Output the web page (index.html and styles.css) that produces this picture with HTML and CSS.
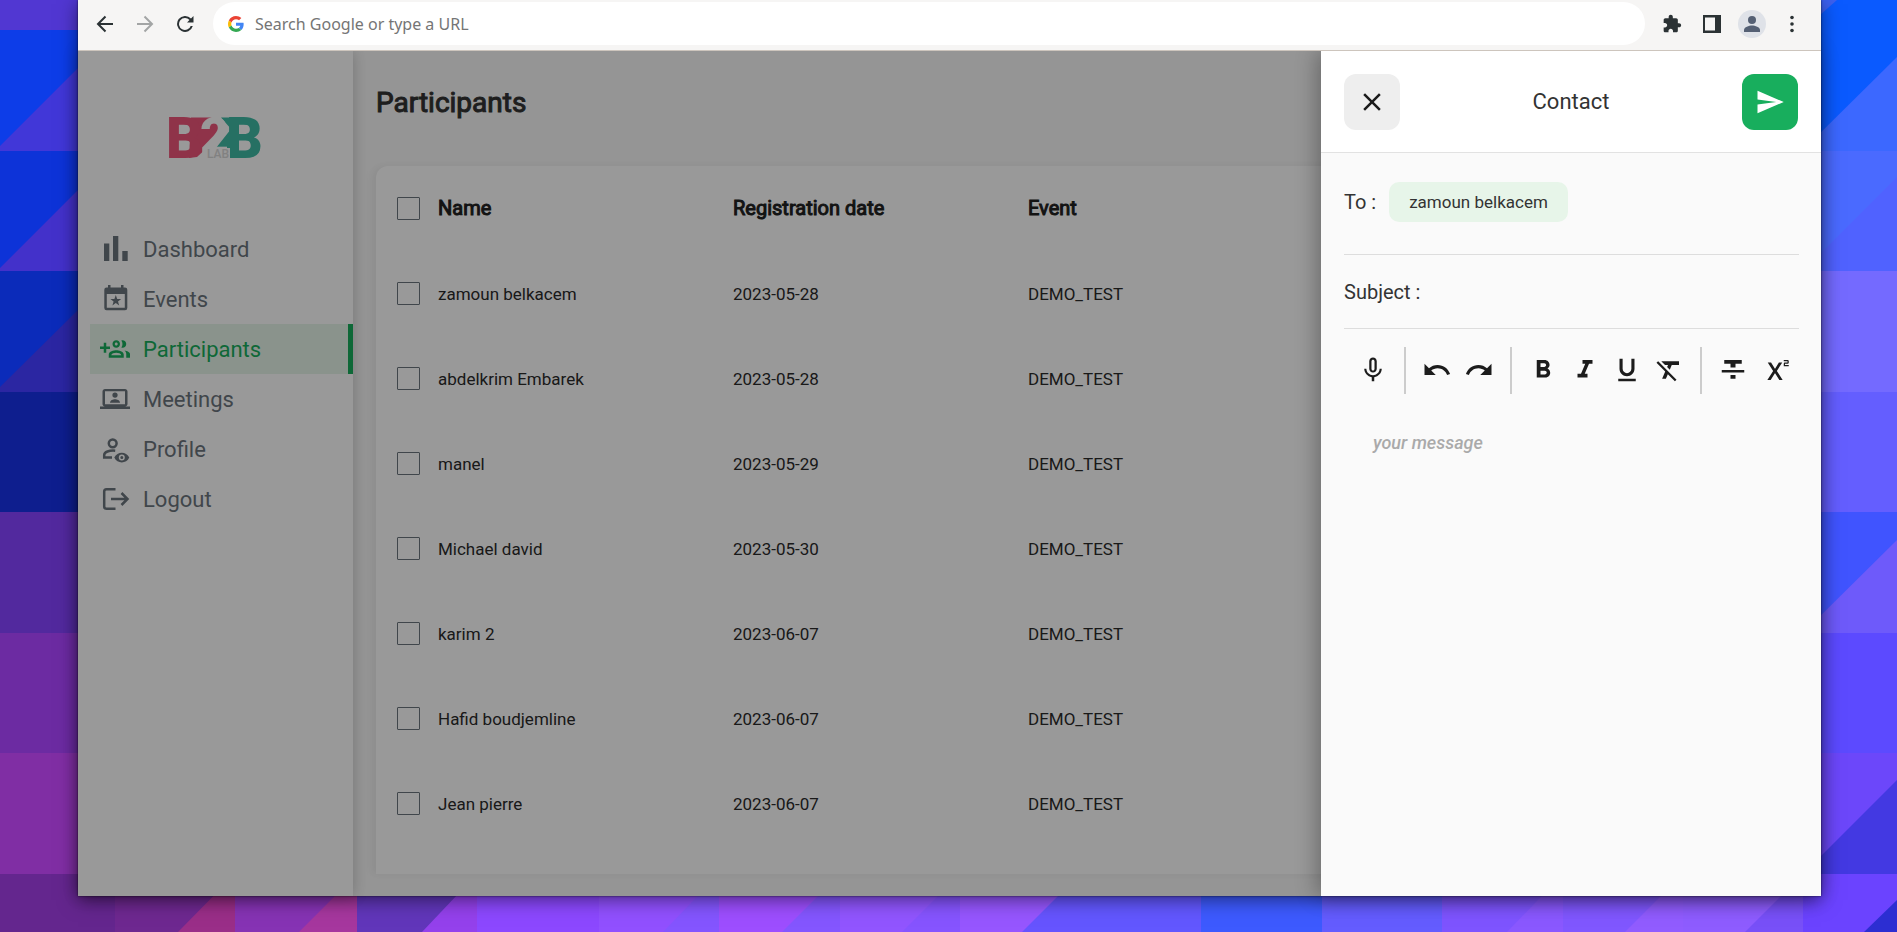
FILE: index.html
```html
<!DOCTYPE html>
<html lang="en">
<head>
<meta charset="utf-8">
<title>Participants</title>
<link rel="stylesheet" href="styles.css">
</head>
<body>
<svg class="wallpaper" viewBox="0 0 1897 932" preserveAspectRatio="none" aria-hidden="true">
  <rect width="1897" height="932" fill="#5b48ff"/>
  <rect width="120" height="30" fill="#5137d2"/>
  <path d="M0 30H120V151H0z" fill="#0d3de8"/><path d="M0 146L78 68L120 26V151H0z" fill="#4137d8"/>
  <path d="M0 151H120V271H0z" fill="#0d33d8"/><path d="M0 268L78 190L120 151V271H0z" fill="#4331ca"/>
  <rect y="271" width="120" height="121" fill="#0b2bba"/><path d="M0 387L78 310L120 271V392H0z" fill="#2b26a2"/>
  <rect y="392" width="120" height="120" fill="#0e1e8e"/>
  <rect y="512" width="120" height="121" fill="#52299e"/>
  <rect y="633" width="120" height="120" fill="#6c2ba2"/>
  <rect y="753" width="120" height="121" fill="#802ea4"/>
  <rect y="874" width="120" height="58" fill="#64268e"/>
  <g transform="translate(0 874)">
    <path d="M115 0H235V58H115z" fill="#6e2890"/><path d="M178 58L235 0V58z" fill="#9a2e88"/>
    <path d="M235 0H357V58H235z" fill="#8633b4"/><path d="M299 58L357 0V58z" fill="#a6379e"/>
    <path d="M357 0H477V58H357z" fill="#6136ba"/><path d="M422 58L477 0V58z" fill="#9441ec"/>
    <path d="M477 0H599V58H477z" fill="#8c48ff"/>
    <path d="M599 0H719V58H599z" fill="#9150ff"/><path d="M663 58L719 0V58z" fill="#8455ff"/>
    <path d="M719 0H840V58H719z" fill="#9d4eff"/><path d="M782 58L840 0V58z" fill="#8456ff"/>
    <path d="M840 0H960V58H840z" fill="#9155ff"/><path d="M902 58L960 0V58z" fill="#8654ff"/>
    <path d="M960 0H1080V58H960z" fill="#9656ff"/><path d="M1022 58L1080 0V58z" fill="#6654ff"/>
    <path d="M1080 0H1201V58H1080z" fill="#6257ff"/>
    <path d="M1201 0H1322V58H1201z" fill="#3d5aff"/>
    <path d="M1322 0H1442V58H1322z" fill="#645cff"/>
    <path d="M1442 0H1563V58H1442z" fill="#7e54ff"/><path d="M1507 58L1563 0V58z" fill="#8a58ff"/>
    <path d="M1563 0H1683V58H1563z" fill="#8057ff"/><path d="M1625 58L1683 0V58z" fill="#915cff"/>
    <path d="M1683 0H1803V58H1683z" fill="#8e5cff"/><path d="M1745 58L1803 0V58z" fill="#7850f8"/>
  </g>
  <g transform="translate(1803 0)">
    <path d="M0 0H94V151H0z" fill="#0a5aff"/><path d="M0 30L34 0H0z" fill="#3c60f0"/><path d="M0 150L94 57V151H0z" fill="#3c68ff"/>
    <path d="M0 151H94V271H0z" fill="#4a6aff"/><path d="M0 271L94 177V271z" fill="#5062ff"/>
    <path d="M0 271H94V392H0z" fill="#746aff"/>
    <path d="M0 392H94V512H0z" fill="#645eff"/>
    <path d="M0 512H94V633H0z" fill="#4054ff"/><path d="M0 633L94 540V633z" fill="#6e5afa"/>
    <path d="M0 633H94V753H0z" fill="#5c4aff"/>
    <path d="M0 753H94V874H0z" fill="#6c47fa"/><path d="M0 874L94 780V874z" fill="#4339e2"/>
    <path d="M0 874H94V932H0z" fill="#6b43ff"/><path d="M61 932L94 900V932z" fill="#2c2ed2"/>
  </g>
</svg>

<div class="window">
  <header class="toolbar">
    <button class="tool" aria-label="Back"><svg width="18" height="18" viewBox="0 0 18 18" fill="none" stroke="#2b3234" stroke-width="2"><path d="M17 9H2M9.500 1.500L2 9l7.500 7.500"/></svg></button>
    <button class="tool" aria-label="Forward"><svg width="18" height="18" viewBox="0 0 18 18" fill="none" stroke="#a3a5a5" stroke-width="2"><path d="M1 9h15M8.500 1.500L16 9l-7.500 7.500"/></svg></button>
    <button class="tool" aria-label="Reload"><svg width="18" height="18" viewBox="0 0 18 18"><path d="M15 3.500A8 8 0 1 0 16.800 11h-2.100a6 6 0 1 1-1.200-6L11 7.500h6.500V1z" fill="#2b3234"/></svg></button>
    <label class="omnibox">
      <svg width="16" height="16" viewBox="0 0 48 48"><path fill="#EA4335" d="M24 9.500c3.540 0 6.710 1.220 9.210 3.600l6.850-6.850C35.900 2.380 30.470 0 24 0 14.620 0 6.510 5.380 2.560 13.220l7.980 6.190C12.430 13.720 17.740 9.500 24 9.500z"/><path fill="#4285F4" d="M46.980 24.550c0-1.570-.15-3.090-.38-4.550H24v9.020h12.940c-.58 2.960-2.260 5.480-4.780 7.180l7.730 6c4.510-4.180 7.090-10.360 7.090-17.650z"/><path fill="#FBBC05" d="M10.530 28.590c-.48-1.450-.76-2.990-.76-4.590s.27-3.140.76-4.590l-7.980-6.190C.92 16.460 0 20.120 0 24c0 3.880.92 7.540 2.560 10.780l7.970-6.190z"/><path fill="#34A853" d="M24 48c6.480 0 11.930-2.130 15.890-5.810l-7.730-6c-2.150 1.450-4.920 2.300-8.160 2.300-6.260 0-11.570-4.220-13.470-9.910l-7.980 6.190C6.510 42.620 14.620 48 24 48z"/></svg>
      <input type="text" placeholder="Search Google or type a URL" aria-label="Address">
    </label>
    <button class="tool" aria-label="Extensions"><svg width="20" height="20" viewBox="0 0 24 24" fill="#2b3234"><path d="M20.500 11H19V7c0-1.100-.9-2-2-2h-4V3.500C13 2.120 11.880 1 10.500 1S8 2.120 8 3.500V5H4c-1.100 0-2 .9-2 2v3.800h1.500c1.490 0 2.700 1.210 2.700 2.700s-1.210 2.700-2.700 2.700H2V20c0 1.100.9 2 2 2h3.800v-1.500c0-1.490 1.210-2.700 2.700-2.700s2.700 1.210 2.700 2.700V22H17c1.100 0 2-.9 2-2v-4h1.500c1.380 0 2.500-1.120 2.500-2.500S21.880 11 20.500 11z"/></svg></button>
    <button class="tool" aria-label="Side panel"><svg width="18" height="18" viewBox="0 0 18 18"><path fill="#2b3234" fill-rule="evenodd" d="M0 0h18v18H0zM2 2.500v13h10v-13z"/></svg></button>
    <button class="tool" aria-label="Account"><svg width="28" height="28" viewBox="0 0 28 28"><circle cx="14" cy="14" r="14" fill="#dfe2e8"/><circle cx="14" cy="10" r="4" fill="#556074"/><path d="M6 22v-2c0-3 5-4.500 8-4.500s8 1.500 8 4.500v2z" fill="#556074"/></svg></button>
    <button class="tool" aria-label="Menu"><svg width="18" height="18" viewBox="0 0 18 18" fill="#2b3234"><circle cx="9" cy="2.500" r="1.800"/><circle cx="9" cy="9" r="1.800"/><circle cx="9" cy="15.500" r="1.800"/></svg></button>
  </header>

  <div class="page">
    <aside class="sidebar">
      <a class="brand" href="#" aria-label="B2B LAB">
        <svg class="logo" width="94" height="42" viewBox="0 0 94 42">
          <path d="M22 .5H42L54 10 52 18 28 40 20 41z" fill="#ee557a"/>
          <path d="M52 .5H70V41H61V31H47L62 12z" fill="#40bba5"/>
          <text class="logo-b" x="-3" y="41" fill="#ee557a">B</text>
          <text class="logo-b" x="57" y="41" fill="#40bba5">B</text>
          <text class="logo-two" x="31" y="36">2</text>
          <path d="M30 42L40 31H61V42z" fill="#fff"/>
          <text class="logo-lab" x="38" y="41">LAB</text>
        </svg>
      </a>
      <nav class="nav">
        <a class="nav-link" href="#"><svg class="icon" viewBox="0 0 30 30"><path d="M4 9.500h5.300V27H4zM13 2h5.300v25H13zM22.300 17h5.400v10h-5.400z"/></svg>Dashboard</a>
        <a class="nav-link" href="#"><svg class="icon" viewBox="0 0 30 30"><path fill-rule="evenodd" d="M8 1h2.500v2.500h10.500V1h2.500v2.500H25a2.300 2.300 0 0 1 2.300 2.300V24A2.300 2.300 0 0 1 25 26.300H6.600A2.300 2.300 0 0 1 4.300 24V5.800a2.300 2.300 0 0 1 2.300-2.300H8zM6.800 10v13.800h18V10z"/><path d="M15.800 11l1.400 4h4l-3.200 2.500 1.200 4-3.400-2.400-3.400 2.400 1.200-4-3.200-2.500h4z"/></svg>Events</a>
        <a class="nav-link active" href="#" aria-current="page"><svg class="icon" viewBox="0 0 24 24"><path d="M8 10H5V7H3v3H0v2h3v3h2v-3h3zM18 11c1.660 0 2.990-1.340 2.990-3S19.660 5 18 5c-.32 0-.63.05-.91.14.57.81.9 1.790.9 2.860s-.34 2.040-.9 2.860c.28.09.59.14.91.14zM13 11c1.660 0 2.990-1.340 2.990-3S14.660 5 13 5c-1.660 0-3 1.340-3 3s1.340 3 3 3zm0-4.200c.66 0 1.200.54 1.200 1.200s-.54 1.200-1.200 1.200-1.200-.54-1.200-1.200.54-1.200 1.200-1.200zM19.620 13.160c.83.73 1.380 1.660 1.380 2.840v3h3v-3c0-1.540-2.370-2.490-4.380-2.840zM13 13c-2 0-6 1-6 3.500V19h12v-2.500c0-2.500-4-3.500-6-3.500zm-4 4c.3-1.400 2.300-2 4-2s3.700.6 4 2z"/></svg>Participants</a>
        <a class="nav-link" href="#"><svg class="icon" viewBox="0 0 24 24"><path fill-rule="evenodd" d="M20 18c1.100 0 2-.9 2-2V6c0-1.100-.9-2-2-2H4c-1.100 0-2 .9-2 2v10c0 1.100.9 2 2 2H0v2h24v-2zM4 5.800h16V16.200H4z"/><circle cx="12" cy="8.800" r="2.100"/><path d="M8 15c0-2 2.500-2.800 4-2.800s4 .8 4 2.800z"/></svg>Meetings</a>
        <a class="nav-link" href="#"><svg class="icon" viewBox="0 0 30 30"><g fill="none" stroke="currentColor" stroke-width="2.500"><circle cx="12.700" cy="9.300" r="3.900"/><path d="M12 23.500H4.200V21c0-3 5-4.800 11-4.300"/></g><path fill-rule="evenodd" d="M14.300 23.500c3-6.500 12-6.500 15 0-3 6.500-12 6.500-15 0zm7.500-3a3 3 0 1 0 0 6 3 3 0 0 0 0-6zm0 1.500a1.500 1.500 0 1 1 0 3 1.500 1.500 0 0 1 0-3z"/></svg>Profile</a>
        <a class="nav-link" href="#"><svg class="icon" viewBox="0 0 30 30"><path fill="none" stroke="currentColor" stroke-width="2.500" d="M15.500 5.300H6.500a2.300 2.300 0 0 0-2.300 2.300V22.400a2.300 2.300 0 0 0 2.300 2.300H15.500M11 15H27M21.500 9l6 6-6 6"/></svg>Logout</a>
      </nav>
    </aside>

    <main class="main">
      <h1 class="title">Participants</h1>
      <div class="card">
        <table class="table">
          <colgroup><col class="col-check"><col class="col-text"><col class="col-text"><col></colgroup>
          <thead>
            <tr><th><input class="check" type="checkbox" aria-label="Select all"></th><th>Name</th><th>Registration date</th><th>Event</th></tr>
          </thead>
          <tbody>
            <tr><td><input class="check" type="checkbox" aria-label="Select zamoun belkacem"></td><td>zamoun belkacem</td><td>2023-05-28</td><td>DEMO_TEST</td></tr>
            <tr><td><input class="check" type="checkbox" aria-label="Select abdelkrim Embarek"></td><td>abdelkrim Embarek</td><td>2023-05-28</td><td>DEMO_TEST</td></tr>
            <tr><td><input class="check" type="checkbox" aria-label="Select manel"></td><td>manel</td><td>2023-05-29</td><td>DEMO_TEST</td></tr>
            <tr><td><input class="check" type="checkbox" aria-label="Select Michael david"></td><td>Michael david</td><td>2023-05-30</td><td>DEMO_TEST</td></tr>
            <tr><td><input class="check" type="checkbox" aria-label="Select karim 2"></td><td>karim 2</td><td>2023-06-07</td><td>DEMO_TEST</td></tr>
            <tr><td><input class="check" type="checkbox" aria-label="Select Hafid boudjemline"></td><td>Hafid boudjemline</td><td>2023-06-07</td><td>DEMO_TEST</td></tr>
            <tr><td><input class="check" type="checkbox" aria-label="Select Jean pierre"></td><td>Jean pierre</td><td>2023-06-07</td><td>DEMO_TEST</td></tr>
          </tbody>
        </table>
      </div>
    </main>

    <div class="backdrop"></div>
    <section class="drawer" aria-labelledby="drawer-title">
      <header class="drawer-head">
        <button class="square" aria-label="Close"><svg class="icon" viewBox="0 0 24 24"><path d="M19 6.410L17.590 5 12 10.590 6.410 5 5 6.410 10.590 12 5 17.590 6.410 19 12 13.410 17.590 19 19 17.590 13.410 12z"/></svg></button>
        <h2 class="drawer-title" id="drawer-title">Contact</h2>
        <button class="square send" aria-label="Send"><svg class="icon" viewBox="0 0 24 24"><path d="M2.010 21L23 12 2.010 3 2 10l15 2-15 2z"/></svg></button>
      </header>
      <form class="compose">
        <div class="field to"><span>To :</span><span class="chip">zamoun belkacem</span></div>
        <div class="field subject"><label for="subject">Subject :</label><input id="subject" type="text"></div>
        <div class="editor-bar">
          <button type="button" aria-label="Dictate"><svg class="icon" viewBox="0 0 24 24"><path d="M12 14c1.660 0 2.990-1.340 2.990-3L15 5c0-1.660-1.340-3-3-3S9 3.340 9 5v6c0 1.660 1.340 3 3 3zm-1.200-9.100c0-.66.54-1.200 1.200-1.200s1.200.54 1.200 1.200l-.01 6.200c0 .66-.53 1.200-1.190 1.200s-1.200-.54-1.200-1.200V4.900zM17.300 11c0 3-2.540 5.100-5.300 5.100S6.700 14 6.700 11H5c0 3.410 2.720 6.230 6 6.720V21h2v-3.280c3.280-.48 6-3.300 6-6.720z"/></svg></button>
          <span class="rule"></span>
          <button type="button" aria-label="Undo"><svg class="icon" viewBox="0 0 24 24"><path d="M12.500 8c-2.650 0-5.050.99-6.900 2.600L2 7v9h9l-3.620-3.620c1.390-1.160 3.160-1.880 5.120-1.880 3.540 0 6.550 2.310 7.600 5.500l2.370-.78C21.080 11.030 17.150 8 12.500 8z"/></svg></button>
          <button type="button" aria-label="Redo"><svg class="icon" viewBox="0 0 24 24"><path d="M18.400 10.600C16.550 8.990 14.150 8 11.500 8c-4.650 0-8.580 3.030-9.960 7.220L3.900 16c1.050-3.190 4.050-5.500 7.600-5.500 1.950 0 3.730.72 5.120 1.880L13 16h9V7z"/></svg></button>
          <span class="rule"></span>
          <button type="button" aria-label="Bold"><svg class="icon" viewBox="0 0 24 24"><path d="M15.600 10.790c.97-.67 1.650-1.770 1.650-2.790 0-2.260-1.750-4-4-4H7v14h7.040c2.090 0 3.710-1.700 3.710-3.790 0-1.520-.86-2.820-2.150-3.420zM10 6.500h3c.83 0 1.500.67 1.500 1.500s-.67 1.500-1.500 1.500h-3zm3.500 9H10v-3h3.500c.83 0 1.500.67 1.500 1.500s-.67 1.500-1.500 1.500z"/></svg></button>
          <button type="button" aria-label="Italic"><svg class="icon" viewBox="0 0 24 24"><path d="M10 4v3h2.210l-3.420 8H6v3h8v-3h-2.210l3.420-8H18V4z"/></svg></button>
          <button type="button" aria-label="Underline"><svg class="icon" viewBox="0 0 24 24"><path d="M12 17c3.310 0 6-2.690 6-6V3h-2.500v8c0 1.930-1.570 3.500-3.500 3.500S8.500 12.930 8.500 11V3H6v8c0 3.310 2.690 6 6 6zm-7 2v2h14v-2z"/></svg></button>
          <button type="button" aria-label="Clear formatting"><svg class="icon" viewBox="0 0 24 24"><path d="M3.270 5L2 6.270l6.970 6.970L6.500 19h3l1.570-3.660L16.730 21 18 19.730 3.550 5.270zM6 5v.18L8.820 8h2.400l-.72 1.680 2.100 2.100L14.210 8H20V5z"/></svg></button>
          <span class="rule"></span>
          <button type="button" aria-label="Strikethrough"><svg class="icon" viewBox="0 0 24 24"><path d="M10 19h4v-3h-4zM5 4v3h5v3h4V7h5V4zM3 14h18v-2H3z"/></svg></button>
          <button type="button" aria-label="Superscript"><svg class="icon" viewBox="0 0 24 24"><path d="M22 7h-2v1h3v1h-4V7c0-.55.45-1 1-1h2V5h-3V4h3c.55 0 1 .45 1 1v1c0 .55-.45 1-1 1zM5.880 20h2.660l3.400-5.420h.12l3.400 5.420h2.660l-4.650-7.270L17.810 6h-2.680l-3.070 4.990h-.12L8.850 6H6.190l4.320 6.730z"/></svg></button>
        </div>
        <textarea class="message" placeholder="your message" aria-label="Message"></textarea>
      </form>
    </section>
  </div>
</div>
</body>
</html>
```

FILE: styles.css
```css
* { box-sizing: border-box; }

body {
  margin: 0;
  height: 100vh;
  overflow: hidden;
  font-family: Roboto, sans-serif;
  color: #2b2b2b;
}

button, input, textarea { font: inherit; color: inherit; }
button { display: flex; align-items: center; justify-content: center; padding: 0; border: 0; background: none; }

.wallpaper { position: absolute; inset: 0; z-index: -1; width: 100%; height: 100%; }

.window {
  display: flex;
  flex-direction: column;
  height: calc(100vh - 36px);
  margin: 0 76px 36px 78px;
  box-shadow: 0 0 2px rgba(0, 0, 0, .7), 0 4px 18px rgba(0, 0, 0, .5);
}

/* Browser toolbar */
.toolbar {
  position: relative;
  z-index: 1;
  display: flex;
  align-items: center;
  height: 51px;
  padding: 0 9px 3px 7px;
  background: #f6f5f4;
  border-bottom: 1px solid #cdc5bd;
}
.tool { width: 40px; height: 28px; flex: none; }
.omnibox {
  flex: 1;
  display: flex;
  align-items: center;
  gap: 11px;
  height: 43px;
  margin: 0 7px 0 8px;
  padding: 0 15px;
  border-radius: 22px;
  background: #fff;
}
.omnibox input {
  flex: 1;
  padding: 0;
  border: 0;
  background: none;
  font: 16px/22px "Noto Sans", sans-serif;
}
.omnibox input::placeholder { color: #757575; }

/* Page */
.page { position: relative; flex: 1; display: flex; min-height: 0; background: #f9f9f9; }
.icon { width: 30px; height: 30px; flex: none; fill: currentColor; }

.sidebar {
  position: relative;
  width: 275px;
  flex: none;
  padding-left: 12px;
  background: #fff;
  box-shadow: 0 0 14px rgba(0, 0, 0, .22);
}
.brand { display: flex; justify-content: center; height: 173px; padding: 66px 11px 0 0; }
.logo { overflow: visible; }
.logo-b { font: 900 57px Roboto, sans-serif; }
.logo-two { font: 900 50px Roboto, sans-serif; fill: #fff; }
.logo-lab { font: 500 12px Roboto, sans-serif; fill: #d8d8d8; }
.nav { display: flex; flex-direction: column; }
.nav-link {
  display: flex;
  align-items: center;
  gap: 13px;
  height: 50px;
  padding-left: 10px;
  border-right: 5px solid transparent;
  color: #6c757d;
  font-size: 22px;
  text-decoration: none;
}
.nav-link.active { background: #e6f5e9; border-color: #18ae5d; color: #18ae5d; }

.main { flex: 1; display: flex; flex-direction: column; min-width: 0; padding: 32px 22px 22px 23px; }
.title { margin: 0 0 43px; font-size: 28px; line-height: 40px; font-weight: 400; -webkit-text-stroke: 1px; color: #333; }
.card {
  flex: 1;
  overflow: hidden;
  border-radius: 12px 12px 0 0;
  background: #fff;
  box-shadow: -4px 0 8px rgba(0, 0, 0, .06);
}
.table { width: 100%; table-layout: fixed; border-collapse: collapse; font-size: 17px; text-align: left; }
.table tr { height: 85px; }
.table th, .table td { padding: 0; vertical-align: middle; }
.table th { padding-bottom: 1px; font-size: 20px; font-weight: 400; -webkit-text-stroke: 1px; color: #212121; }
.col-check { width: 62px; }
.col-text { width: 295px; }
.check {
  display: block;
  appearance: none;
  width: 23px;
  height: 23px;
  margin: 0 0 0 21px;
  border: 1px solid #6c757d;
  border-radius: 1px;
}

.backdrop { position: absolute; inset: 0; background: rgba(0, 0, 0, .4); }

/* Contact drawer */
.drawer {
  position: absolute;
  inset: 0 0 0 auto;
  display: flex;
  flex-direction: column;
  width: 500px;
  background: #fafafa;
  box-shadow: -4px 0 20px rgba(0, 0, 0, .3);
}
.drawer-head {
  display: flex;
  align-items: center;
  justify-content: space-between;
  height: 102px;
  padding: 0 23px;
  background: #fff;
  border-bottom: 1px solid #e2e2e2;
}
.drawer-title { margin: 0; font-size: 22px; font-weight: 400; color: #333; }
.square { width: 56px; height: 56px; border-radius: 12px; background: #eee; color: #1a1a1a; }
.square.send { background: #18ae5d; color: #fff; }

.compose { flex: 1; display: flex; flex-direction: column; padding: 0 22px 0 23px; font-size: 20px; color: #333; }
.field { display: flex; align-items: center; border-bottom: 1px solid #ddd; }
.to { gap: 13px; height: 102px; padding-bottom: 3px; }
.chip { padding: 0 20px; border-radius: 10px; background: #e7f5e9; font-size: 17px; line-height: 40px; }
.subject { gap: 12px; height: 74px; }
.subject input { flex: 1; min-width: 0; border: 0; background: none; }

.editor-bar { display: flex; align-items: center; justify-content: flex-end; height: 82px; padding-right: 3px; color: #1c1c1c; }
.editor-bar button { width: 42px; height: 42px; }
.rule { width: 2px; height: 47px; margin: 0 10px; background: #ccc; }
.message {
  flex: 1;
  padding: 20px 29px;
  border: 0;
  resize: none;
  background: none;
  font-size: 18px;
  line-height: 24px;
}
.message::placeholder { color: #aaa; font-style: italic; font-weight: 500; }
```
